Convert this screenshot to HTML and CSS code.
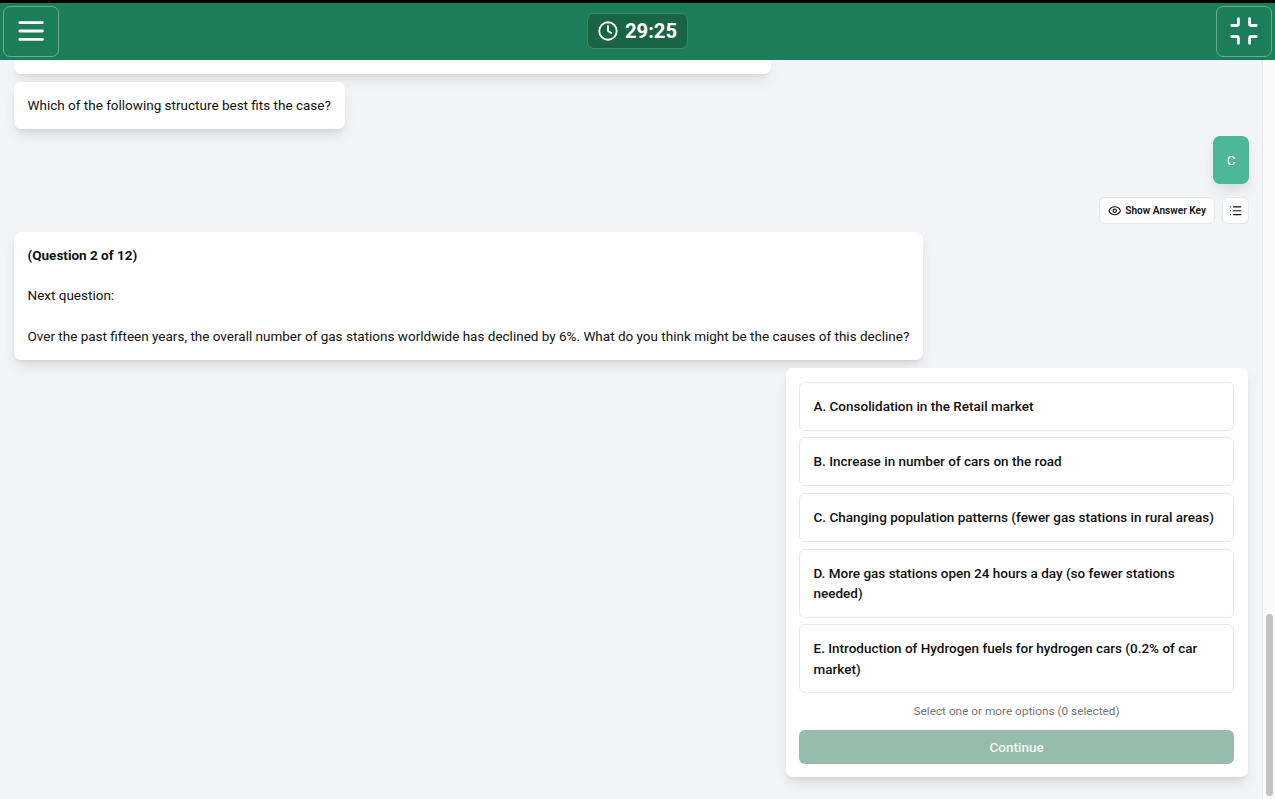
FILE: index.html
```html
<!DOCTYPE html>
<html lang="en">
<head>
<meta charset="utf-8">
<title>Case practice</title>
<link rel="stylesheet" href="styles.css">
</head>
<body>
<header class="topbar">
  <button class="icon-button" aria-label="Menu">
    <svg width="30" height="24" viewBox="0 0 30 24" fill="none" stroke="currentColor" stroke-width="2.8" stroke-linecap="round"><path d="M3.8 3.6h22.6M3.8 12h22.6M3.8 20.4h22.6"/></svg>
  </button>
  <div class="timer">
    <svg width="20" height="20" viewBox="0 0 24 24" fill="none" stroke="currentColor" stroke-width="2.2" stroke-linecap="round" stroke-linejoin="round"><circle cx="12" cy="12" r="10.5"/><path d="M12 6v6l3.8 2.4"/></svg>
    <span>29:25</span>
  </div>
  <button class="icon-button" aria-label="Exit full screen">
    <svg width="30" height="30" viewBox="0 0 30 30" fill="none" stroke="currentColor" stroke-width="2.8" stroke-linecap="round" stroke-linejoin="round"><path d="M9.4 2.7v5a1.8 1.8 0 0 1-1.8 1.8H2.7M20.6 2.7v5a1.8 1.8 0 0 0 1.8 1.8h4.9M2.7 20.5h4.9a1.8 1.8 0 0 1 1.8 1.8v5M27.3 20.5h-4.9a1.8 1.8 0 0 0-1.8 1.8v5"/></svg>
  </button>
</header>
<div class="body">
  <main class="chat">
    <div class="card previous"></div>
    <div class="card question">Which of the following structure best fits the case?</div>
    <div class="answer">C</div>
    <div class="actions">
      <button class="small-button">
        <svg width="13.5" height="13.5" viewBox="0 0 24 24" fill="none" stroke="currentColor" stroke-width="2" stroke-linecap="round" stroke-linejoin="round"><path d="M2.06 12.35a1 1 0 0 1 0-.7 10.75 10.75 0 0 1 19.88 0 1 1 0 0 1 0 .7 10.75 10.75 0 0 1-19.88 0"/><circle cx="12" cy="12" r="3"/></svg>
        Show Answer Key
      </button>
      <button class="small-button square" aria-label="List">
        <svg width="13.5" height="13.5" viewBox="0 0 24 24" fill="none" stroke="currentColor" stroke-width="2.2" stroke-linecap="round"><path d="M8 5h13M8 12h13M8 19h13M3 5h.01M3 12h.01M3 19h.01"/></svg>
      </button>
    </div>
    <div class="card next">
      <p><strong>(Question 2 of 12)</strong></p>
      <p>Next question:</p>
      <p>Over the past fifteen years, the overall number of gas stations worldwide has declined by 6%. What do you think might be the causes of this decline?</p>
    </div>
    <section class="card options">
      <div class="option">A. Consolidation in the Retail market</div>
      <div class="option">B. Increase in number of cars on the road</div>
      <div class="option">C. Changing population patterns (fewer gas stations in rural areas)</div>
      <div class="option">D. More gas stations open 24 hours a day (so fewer stations needed)</div>
      <div class="option">E. Introduction of Hydrogen fuels for hydrogen cars (0.2% of car market)</div>
      <div class="hint">Select one or more options (0 selected)</div>
      <button class="continue">Continue</button>
    </section>
  </main>
  <div class="scrollbar"><div class="thumb"></div></div>
</div>
</body>
</html>
```
FILE: styles.css
```css
* { box-sizing: border-box; }
html { font-size: 13.5px; }
body {
  margin: 0;
  height: 799px;
  overflow: hidden;
  display: flex;
  flex-direction: column;
  background: #f3f4f6;
  color: #111;
  font-family: Roboto, sans-serif;
  font-size: 1rem;
  line-height: 1.5;
}
button { font: inherit; margin: 0; }
svg { display: block; flex: none; }
p { margin: 0; }

.topbar {
  flex: none;
  height: 60px;
  border-top: 3px solid #000;
  background: #1b7d59;
  color: #fff;
  display: flex;
  align-items: center;
  justify-content: space-between;
  padding: 0 3px 1px;
}
.icon-button {
  width: 56px;
  height: 51px;
  padding: 0;
  display: flex;
  align-items: center;
  justify-content: center;
  background: transparent;
  border: 1px solid #69ac92;
  border-radius: 7px;
  color: #fff;
}
.timer {
  width: 101px;
  height: 36px;
  display: flex;
  align-items: center;
  justify-content: center;
  gap: 7px;
  background: #1a6446;
  border: 1px solid #3f8668;
  border-radius: 7px;
  font-size: 20.25px;
  font-weight: 700;
}

.body { flex: 1; min-height: 0; display: flex; }
.chat {
  flex: 1;
  min-width: 0;
  padding: 0 14px;
  display: flex;
  flex-direction: column;
  align-items: flex-start;
}
.card {
  background: #fff;
  border-radius: 7px;
  padding: 13.5px;
  box-shadow: 0 8px 13px -2px rgba(0, 0, 0, .1), 0 3px 5px -3px rgba(0, 0, 0, .12);
}
.previous {
  width: 757px;
  height: 13.5px;
  padding: 0;
  border-radius: 0 0 7px 7px;
}
.question { margin-top: 8.25px; padding-right: 14px; }
.answer {
  align-self: flex-end;
  margin: 7.25px -1px 0 0;
  padding: 13.5px;
  border-radius: 7px;
  background: #4db896;
  color: #fff;
  box-shadow: 0 8px 13px -2px rgba(0, 0, 0, .1);
}
.actions {
  align-self: flex-end;
  display: flex;
  gap: 7px;
  margin: 13.5px -1px 0 0;
}
.small-button {
  height: 27px;
  display: flex;
  align-items: center;
  gap: 3.4px;
  padding: 0 8px;
  border: 1px solid #e6e8eb;
  border-radius: 6px;
  background: #fff;
  color: #111;
  font-size: 10.125px;
  font-weight: 600;
}
.square { width: 27px; padding: 0; justify-content: center; }
.next {
  margin-top: 8px;
  padding-top: 12.9px;
  padding-bottom: 14.1px;
  display: flex;
  flex-direction: column;
  gap: 20.25px;
}
.options {
  align-self: flex-end;
  width: 462.4px;
  margin-top: 8px;
  padding-right: 14px;
  display: flex;
  flex-direction: column;
  gap: 6.75px;
}
.option {
  padding: 13px 13.4px 13.6px;
  border: 1px solid #e7e8ea;
  border-radius: 6px;
  font-weight: 500;
}
.hint {
  margin: 1.5px 0 2px;
  text-align: center;
  color: #777;
  font-size: 11.8px;
  line-height: 19.4px;
}
.continue {
  height: 34px;
  padding: 0;
  border: 0;
  border-radius: 6px;
  background: #95bcac;
  color: #f3f8f5;
  font-weight: 500;
}
.scrollbar {
  flex: none;
  width: 13px;
  padding-right: 2px;
  background: #fafafa;
  border-left: 1px solid #e8e8e8;
  display: flex;
  flex-direction: column;
  justify-content: flex-end;
  align-items: flex-end;
  padding-bottom: 3px;
}
.thumb { width: 7px; height: 182px; border-radius: 4px; background: #c1c1c1; }
```
